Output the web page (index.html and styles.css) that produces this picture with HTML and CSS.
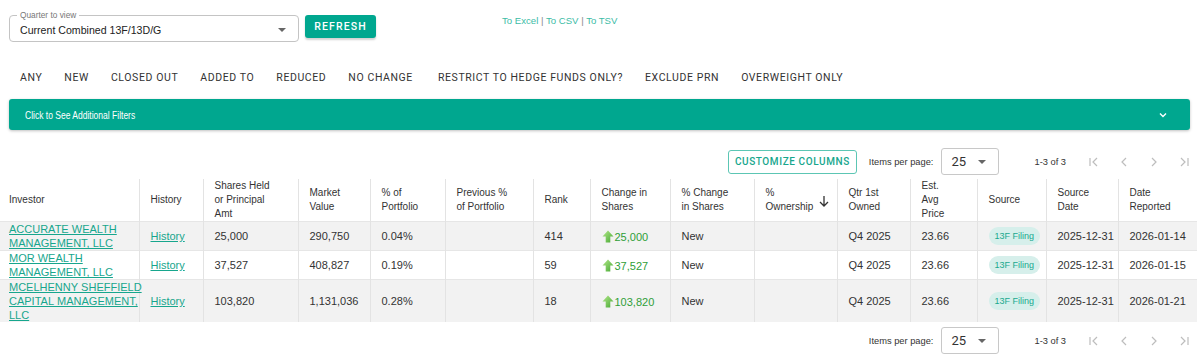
FILE: index.html
```html
<!DOCTYPE html>
<html lang="en">
<head>
  <meta charset="UTF-8" />
  <title>Holders</title>
  <link rel="stylesheet" href="styles.css">
</head>
<body>

<div class="top">
  <div class="select-field">
    <span class="field-label">Quarter to view</span>
    <span class="field-value">Current Combined 13F/13D/G</span>
    <span class="caret"></span>
  </div>
  <div class="btn-refresh">REFRESH</div>
  <div class="exports">
    <a href="#">To Excel</a> <span class="sep">|</span> <a href="#">To CSV</a> <span class="sep">|</span> <a href="#">To TSV</a>
  </div>
</div>

<div class="filters">
  <span class="filter">ANY</span>
  <span class="filter">NEW</span>
  <span class="filter">CLOSED OUT</span>
  <span class="filter">ADDED TO</span>
  <span class="filter">REDUCED</span>
  <span class="filter">NO CHANGE</span>
  <span class="filter wide">RESTRICT TO HEDGE FUNDS ONLY?</span>
  <span class="filter">EXCLUDE PRN</span>
  <span class="filter">OVERWEIGHT ONLY</span>
</div>

<div class="more-filters">
  <span class="more-text">Click to See Additional Filters</span>
  <svg width="10" height="10" viewBox="0 0 10 10"><path d="M2 3.5 L5 6.5 L8 3.5" fill="none" stroke="#fff" stroke-width="1.4"/></svg>
</div>

<div class="pager pager-top">
  <div class="btn-columns">CUSTOMIZE COLUMNS</div>
  <span class="pp-label">Items per page:</span>
  <div class="pp-select"><span>25</span><span class="caret"></span></div>
  <span class="range">1-3 of 3</span>
  <div class="nav">
    <svg width="12" height="12" viewBox="0 0 12 12"><path d="M2 2 V10 M9 2 L5 6 L9 10" fill="none" stroke="#bdbdbd" stroke-width="1.2"/></svg>
    <svg width="12" height="12" viewBox="0 0 12 12"><path d="M8 2 L4 6 L8 10" fill="none" stroke="#bdbdbd" stroke-width="1.2"/></svg>
    <svg width="12" height="12" viewBox="0 0 12 12"><path d="M4 2 L8 6 L4 10" fill="none" stroke="#bdbdbd" stroke-width="1.2"/></svg>
    <svg width="12" height="12" viewBox="0 0 12 12"><path d="M3 2 L7 6 L3 10 M10 2 V10" fill="none" stroke="#bdbdbd" stroke-width="1.2"/></svg>
  </div>
</div>

<table class="holders">
  <colgroup>
    <col class="w139"><col class="w64"><col class="w95"><col class="w72"><col class="w75">
    <col class="w88"><col class="w57"><col class="w80"><col class="w84"><col class="w83">
    <col class="w73"><col class="w67"><col class="w69"><col class="w72"><col class="w79">
  </colgroup>
  <thead>
    <tr>
      <th>Investor</th>
      <th>History</th>
      <th>Shares Held<br>or Principal<br>Amt</th>
      <th>Market<br>Value</th>
      <th>% of<br>Portfolio</th>
      <th>Previous %<br>of Portfolio</th>
      <th>Rank</th>
      <th>Change in<br>Shares</th>
      <th>% Change<br>in Shares</th>
      <th><div class="sorted"><span>%<br>Ownership</span><svg width="10" height="12" viewBox="0 0 10 12"><path d="M5 1 V11 M1 7 L5 11 L9 7" fill="none" stroke="#333" stroke-width="1.3"/></svg></div></th>
      <th>Qtr 1st<br>Owned</th>
      <th>Est.<br>Avg<br>Price</th>
      <th>Source</th>
      <th>Source<br>Date</th>
      <th>Date<br>Reported</th>
    </tr>
  </thead>
  <tbody>
    <tr class="odd">
      <td class="inv"><a href="#">ACCURATE WEALTH MANAGEMENT, LLC</a></td>
      <td><a href="#">History</a></td>
      <td>25,000</td>
      <td>290,750</td>
      <td>0.04%</td>
      <td></td>
      <td>414</td>
      <td><span class="up"><svg width="12" height="13" viewBox="0 0 12 13"><defs><linearGradient id="g1" x1="0" y1="0" x2="1" y2="1"><stop offset="0" stop-color="#b4e88a"/><stop offset="1" stop-color="#45a833"/></linearGradient></defs><path d="M6 0.5 L11.5 6.5 H8.3 V12.5 H3.7 V6.5 H0.5 Z" fill="url(#g1)"/></svg>25,000</span></td>
      <td>New</td>
      <td></td>
      <td>Q4 2025</td>
      <td>23.66</td>
      <td><span class="badge">13F Filing</span></td>
      <td>2025-12-31</td>
      <td>2026-01-14</td>
    </tr>
    <tr>
      <td class="inv"><a href="#">MOR WEALTH MANAGEMENT, LLC</a></td>
      <td><a href="#">History</a></td>
      <td>37,527</td>
      <td>408,827</td>
      <td>0.19%</td>
      <td></td>
      <td>59</td>
      <td><span class="up"><svg width="12" height="13" viewBox="0 0 12 13"><path d="M6 0.5 L11.5 6.5 H8.3 V12.5 H3.7 V6.5 H0.5 Z" fill="url(#g1)"/></svg>37,527</span></td>
      <td>New</td>
      <td></td>
      <td>Q4 2025</td>
      <td>23.66</td>
      <td><span class="badge">13F Filing</span></td>
      <td>2025-12-31</td>
      <td>2026-01-15</td>
    </tr>
    <tr class="odd">
      <td class="inv"><a href="#">MCELHENNY&nbsp;SHEFFIELD CAPITAL&nbsp;MANAGEMENT, LLC</a></td>
      <td><a href="#">History</a></td>
      <td>103,820</td>
      <td>1,131,036</td>
      <td>0.28%</td>
      <td></td>
      <td>18</td>
      <td><span class="up"><svg width="12" height="13" viewBox="0 0 12 13"><path d="M6 0.5 L11.5 6.5 H8.3 V12.5 H3.7 V6.5 H0.5 Z" fill="url(#g1)"/></svg>103,820</span></td>
      <td>New</td>
      <td></td>
      <td>Q4 2025</td>
      <td>23.66</td>
      <td><span class="badge">13F Filing</span></td>
      <td>2025-12-31</td>
      <td>2026-01-21</td>
    </tr>
  </tbody>
</table>

<div class="pager pager-bottom">
  <span class="pp-label">Items per page:</span>
  <div class="pp-select"><span>25</span><span class="caret"></span></div>
  <span class="range">1-3 of 3</span>
  <div class="nav">
    <svg width="12" height="12" viewBox="0 0 12 12"><path d="M2 2 V10 M9 2 L5 6 L9 10" fill="none" stroke="#bdbdbd" stroke-width="1.2"/></svg>
    <svg width="12" height="12" viewBox="0 0 12 12"><path d="M8 2 L4 6 L8 10" fill="none" stroke="#bdbdbd" stroke-width="1.2"/></svg>
    <svg width="12" height="12" viewBox="0 0 12 12"><path d="M4 2 L8 6 L4 10" fill="none" stroke="#bdbdbd" stroke-width="1.2"/></svg>
    <svg width="12" height="12" viewBox="0 0 12 12"><path d="M3 2 L7 6 L3 10 M10 2 V10" fill="none" stroke="#bdbdbd" stroke-width="1.2"/></svg>
  </div>
</div>

</body>
</html>
```

FILE: styles.css
```css
* { box-sizing: border-box; }
body {
  margin: 0;
  font-family: 'Liberation Sans', Arial, sans-serif;
  font-size: 11px;
  color: #333;
  background: #fff;
}
a { color: #17a68d; }

/* top controls */
.top {
  display: flex;
  align-items: flex-start;
  padding: 15px 9px 0;
}
.select-field {
  position: relative;
  width: 290px;
  height: 27px;
  border: 1px solid #c4c4c4;
  border-radius: 4px;
  display: flex;
  align-items: center;
  padding: 3px 12px 0 10px;
}
.field-label {
  position: absolute;
  top: -6px;
  left: 7px;
  padding: 0 3px;
  background: #fff;
  font-size: 8.3px;
  color: #777;
}
.field-value {
  font-size: 10.6px;
  color: #222;
  flex: 1;
}
.caret {
  width: 0;
  height: 0;
  border-left: 4px solid transparent;
  border-right: 4px solid transparent;
  border-top: 4px solid #666;
}
.btn-refresh {
  margin-left: 6px;
  height: 23px;
  width: 71px;
  display: flex;
  align-items: center;
  justify-content: center;
  background: #00a78f;
  color: #fff;
  border-radius: 3px;
  font-family: Roboto, sans-serif;
  font-size: 10.5px;
  font-weight: 500;
  letter-spacing: 1.1px;
  box-shadow: 0 2px 2px rgba(0, 0, 0, 0.18);
}
.exports {
  margin-left: 126px;
  font-size: 9.6px;
}
.exports a { color: #3cbca6; text-decoration: none; }
.exports .sep { color: #888; }

/* filter toggles */
.filters {
  display: flex;
  align-items: center;
  height: 26px;
  margin-top: 22px;
  padding: 0 9px;
}
.filter {
  padding: 0 11px;
  font-family: Roboto, sans-serif;
  font-size: 10.5px;
  letter-spacing: 0.6px;
  color: #333;
}
.filter.wide { margin-left: 3px; }

.more-filters {
  margin: 9px 10px 0 9px;
  height: 31px;
  background: #00a78f;
  border-radius: 3px;
  box-shadow: 0 1px 3px rgba(0, 0, 0, 0.25);
  display: flex;
  align-items: center;
  justify-content: space-between;
  padding: 0 22px 0 16px;
  color: #fff;
}
.more-text {
  display: inline-block;
  font-size: 11.5px;
  transform: scaleX(0.74);
  transform-origin: left center;
}

/* paginator */
.pager {
  display: flex;
  align-items: center;
  justify-content: flex-end;
  padding-right: 10px;
  height: 27px;
  font-size: 9.3px;
}
.pager-top { margin-top: 18px; }
.pager-bottom { margin-top: 5px; }
.btn-columns {
  height: 24px;
  padding: 0 6px;
  display: flex;
  align-items: center;
  border: 1px solid #5cc6b4;
  border-radius: 3px;
  color: #17a68d;
  font-family: Roboto, sans-serif;
  font-size: 10px;
  font-weight: 500;
  letter-spacing: 0.6px;
  margin-right: 12px;
}
.pp-label { color: #333; margin-right: 8px; }
.pp-select {
  width: 58px;
  height: 27px;
  border: 1px solid #c8c8c8;
  border-radius: 3px;
  display: flex;
  align-items: center;
  justify-content: space-between;
  padding: 0 12px 0 9px;
  font-family: Roboto, sans-serif;
  font-size: 13px;
  color: #333;
}
.range { margin-left: 35px; margin-right: 22px; }
.nav { display: flex; gap: 18px; }

/* table */
.holders {
  margin-top: 4px;
  width: 1197px;
  border-collapse: collapse;
  table-layout: fixed;
}
.w139 { width: 139px; } .w64 { width: 64px; } .w95 { width: 95px; }
.w72 { width: 72px; } .w75 { width: 75px; } .w88 { width: 88px; }
.w57 { width: 57px; } .w80 { width: 80px; } .w84 { width: 84px; }
.w83 { width: 83px; } .w73 { width: 73px; } .w67 { width: 67px; }
.w69 { width: 69px; } .w79 { width: 79px; }

.holders th, .holders td {
  text-align: left;
  vertical-align: middle;
  line-height: 14px;
  padding: 0 2px 0 11px;
  border-left: 1px solid #e3e3e3;
  white-space: nowrap;
}
.holders th:first-child, .holders td:first-child {
  border-left: none;
  padding-left: 9px;
  padding-right: 3px;
}
.holders td.inv { white-space: normal; }
.holders th {
  font-weight: normal;
  font-size: 10px;
  line-height: 14px;
  height: 42px;
  color: #333;
}
.holders td { color: #333; border-top: 1px solid #e6e6e6; }
.holders tr.odd td { background: #f2f2f2; }
.sorted { display: flex; align-items: center; gap: 6px; }
.sorted svg { flex-shrink: 0; margin-top: 2px; }
.up { color: #2f9e38; display: inline-flex; align-items: center; gap: 1px; vertical-align: middle; }
.badge {
  display: inline-block;
  vertical-align: middle;
  padding: 3px 6px;
  border-radius: 10px;
  background: #d6efeb;
  color: #19a98f;
  font-size: 9px;
  line-height: 12px;
}
```
